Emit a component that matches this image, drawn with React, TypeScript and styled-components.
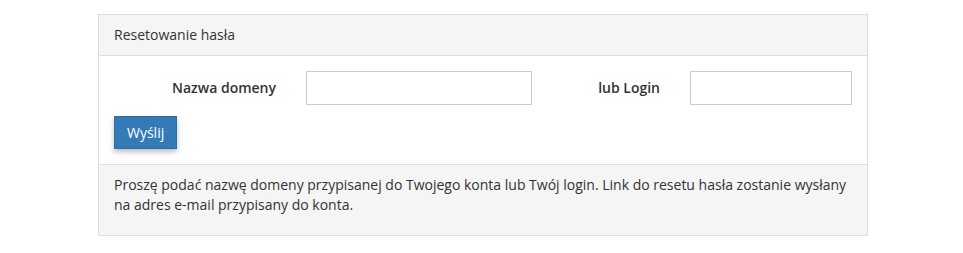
import React from "react";
import styled, { createGlobalStyle } from "styled-components";

const Global = createGlobalStyle`
  html, body { margin: 0; padding: 0; background: #fff; }
  body {
    font-family: "Open Sans", "Noto Sans", sans-serif;
    font-size: 14px;
    line-height: 20px;
    color: #333;
  }
  * { box-sizing: border-box; }
`;

const Page = styled.div`
  padding: 14px 95px 0 98px;
`;

const Panel = styled.div`
  border: 1px solid #ddd;
  background: #fff;
  width: 770px;
`;

const Heading = styled.div`
  background: #f5f5f5;
  border-bottom: 1px solid #ddd;
  padding: 10px 15px;
  font-size: 14px;
  color: #333;
`;

const Body = styled.form`
  padding: 15px;
`;

const Row = styled.div`
  display: grid;
  grid-template-columns: 3fr 4fr 2fr 3fr;
  margin: 0 -15px 11px;
  align-items: start;
`;

const Cell = styled.div`
  padding: 0 15px;
`;

const Label = styled.label`
  display: block;
  text-align: right;
  font-weight: 600;
  padding-top: 7px;
  color: #333;
`;

const Input = styled.input`
  display: block;
  width: 100%;
  height: 34px;
  border: 1px solid #ccc;
  border-radius: 0;
  padding: 6px 12px;
  font: inherit;
  background: #fff;
  outline: none;
`;

const Button = styled.button`
  display: block;
  font-family: "Open Sans", "Noto Sans", sans-serif;
  font-size: 14px;
  line-height: 20px;
  padding: 6px 12px;
  height: 33px;
  color: #fff;
  background: #337ab7;
  border: 1px solid #2e6da4;
  border-radius: 0;
  box-shadow: 0 3px 5px rgba(0, 0, 0, 0.25);
  cursor: pointer;
`;

const Footer = styled.div`
  background: #f5f5f5;
  border-top: 1px solid #ddd;
  padding: 10px 15px;
`;

const Note = styled.p`
  margin: 0 0 10px;
  color: #333;
`;

export default function App() {
  return (
    <>
      <Global />
      <Page>
        <Panel>
          <Heading>Resetowanie hasła</Heading>
          <Body onSubmit={(e) => e.preventDefault()}>
            <Row>
              <Cell>
                <Label htmlFor="domain">Nazwa domeny</Label>
              </Cell>
              <Cell>
                <Input id="domain" type="text" />
              </Cell>
              <Cell>
                <Label htmlFor="login">lub Login</Label>
              </Cell>
              <Cell>
                <Input id="login" type="text" />
              </Cell>
            </Row>
            <Button type="submit">Wyślij</Button>
          </Body>
          <Footer>
            <Note>
              Proszę podać nazwę domeny przypisanej do Twojego konta lub Twój login. Link do resetu hasła
              zostanie wysłany na adres e-mail przypisany do konta.
            </Note>
          </Footer>
        </Panel>
      </Page>
    </>
  );
}
